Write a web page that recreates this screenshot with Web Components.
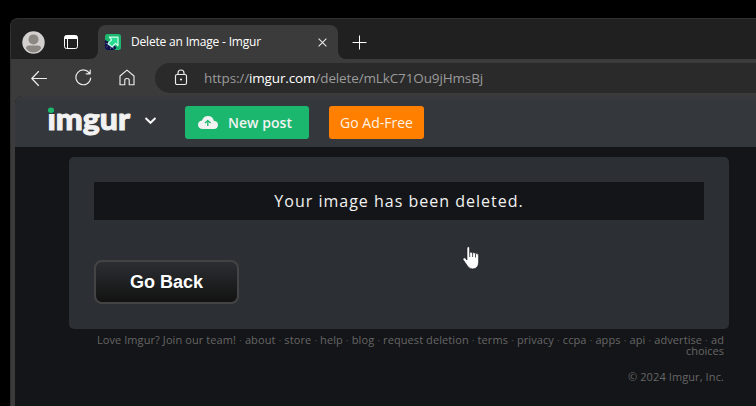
<!DOCTYPE html>
<html lang="en"><head><meta charset="utf-8"><title>Delete an Image - Imgur</title>
<style>html,body{margin:0;width:756px;height:406px;overflow:hidden;background:#000;font-family:"Open Sans","Noto Sans",sans-serif}</style></head>
<body>
<browser-window>
  <tab-strip slot="tabs"><fit-text width="130">Delete an Image - Imgur</fit-text></tab-strip>
  <address-bar slot="tools"><fit-text width="279">https://<b style="font-weight:400;color:#fff">imgur.com</b>/delete/mLkC71Ou9jHmsBj</fit-text></address-bar>
  <site-header></site-header>
  <message-panel>Your image has been deleted.</message-panel>
  <site-footer></site-footer>
</browser-window>
<mouse-hand></mouse-hand>
<script>
const define=(name,html,after)=>customElements.define(name,class extends HTMLElement{
  constructor(){super();this.attachShadow({mode:'open'}).innerHTML=html;}
  connectedCallback(){if(after)after(this);}
});

define('browser-window',`<style>
:host{display:flex;flex-direction:column;box-sizing:border-box;width:746px;height:388px;margin:18px 0 0 10px;background:#3b3b3b;border-top:1px solid #303030;border-left:1px solid #303030;border-radius:8px 0 0 0;overflow:hidden}
main{flex:1;margin-left:4px;background:#141518;border-top-left-radius:7px;overflow:hidden}
</style><slot name="tabs"></slot><slot name="tools"></slot><main><slot></slot></main>`);

define('tab-strip',`<style>
:host{display:flex;height:40px;flex:none;background:#202020;color:#fff;font-size:12px}
.lead{width:87px;display:flex;align-items:center;box-sizing:border-box;padding:6px 0 0 11px;gap:19px;background:#202020;border-bottom-right-radius:8px;height:40px}
.base{background:linear-gradient(#202020 20px,#3b3b3b 20px);display:flex;height:40px;width:100%}
.tab{width:240px;height:34px;margin-top:6px;background:#3b3b3b;border-radius:8px 8px 0 0;display:flex;align-items:center;box-sizing:border-box;padding:0 11px 0 7px}
.label{margin-left:10px;flex:1;line-height:18px}
.rest{flex:1;background:#202020;border-bottom-left-radius:8px;padding:16px 0 0 14px}
svg{display:block}
</style><div class="base"><div class="lead">
<svg width="23" height="23" viewBox="0 0 23 23"><circle cx="11.5" cy="11.5" r="11.2" fill="#d2d0ce"/><circle cx="11.5" cy="8.4" r="5" fill="#8b8783"/><path d="M4 17.6Q4 14.5 7 14.5H16Q19 14.5 19 17.6Q16 21.5 11.5 21.5T4 17.6Z" fill="#8b8783"/></svg>
<svg width="15" height="15" viewBox="0 0 15 15"><rect x=".5" y=".5" width="13" height="13" rx="2" fill="none" stroke="#fff"/><path d="M.5 2.5Q.5 .5 2.5 .5H11.5Q13.5 .5 13.5 2.5V4H.5Z" fill="#fff"/><path d="M3.5 4V13.5" stroke="#fff"/></svg>
</div><div class="tab">
<svg width="16" height="16" viewBox="0 0 16 16"><rect width="16" height="16" rx="2.5" fill="#1bb76e"/><path d="M0 6L3 7.5L5 11.5L10 12L11.5 14L9 16H2.5Q0 16 0 13.5Z" fill="#11104c"/><path d="M4.3 3.2H13V11.7L10.5 9.4L7.2 13L3 9.7L6.6 5.8Z" fill="#26dc91" stroke="#d5fff0" stroke-width="1.2" stroke-linejoin="round"/><path d="M1 9.2L2 10.2M1.5 13L2.6 12M5 14.5L6 13.8M8.6 14.5L8 13.2" stroke="#8fb5c9" stroke-width=".8" fill="none"/></svg>
<div class="label"><slot></slot></div>
<svg width="9" height="9" viewBox="0 0 9 9"><path d="M.6.6L8.4 8.4M8.4.6L.6 8.4" stroke="#e8e8e8" stroke-width="1.1"/></svg>
</div><div class="rest"><svg width="15" height="15" viewBox="0 0 15 15"><path d="M7.5.5V14.5M.5 7.5H14.5" stroke="#fff"/></svg></div></div>`);

define('address-bar',`<style>
:host{display:flex;height:37px;flex:none;background:#3b3b3b;color:#9b9b9b;font-size:13.5px}
nav{display:flex;width:144px;align-items:center;box-sizing:border-box;padding:0 0 0 20px;gap:27px}
svg{display:block;fill:none;stroke:#ececec;stroke-width:1.15;stroke-linejoin:round;stroke-linecap:round}
.url{height:30px;margin-top:4px;flex:1;background:#2a2a2a;border-radius:15px 0 0 15px;display:flex;align-items:center;padding-left:19px;gap:15px;white-space:nowrap}
.url svg{margin-top:-2px}
</style><nav>
<svg width="17" height="16" viewBox="0 0 17 16"><path d="M15.5 8.5H.8M7.5 1.5L.8 8.5L7.5 15.5"/></svg>
<svg width="17" height="17" viewBox="0 0 17 17"><path d="M14.6 4.4A7.4 7.4 0 1 0 15.7 9M15.2 1V4.8H11.2"/></svg>
<svg width="16" height="17" viewBox="0 0 16 17"><path d="M1 7L8 1.1L15 7V15.7H10.2V11Q10.2 9.5 8 9.5T5.8 11V15.7H1Z"/></svg>
</nav><div class="url"><svg width="15" height="17" viewBox="0 0 15 17"><rect x="1.5" y="5.5" width="11" height="10" rx="1.5"/><path d="M4 5.5V4Q4 1 7 1T10 4V5.5"/><circle cx="7" cy="10.5" r=".5" fill="#fff"/></svg><slot></slot></div>`);

define('fit-text',`<style>:host{display:inline-block;white-space:nowrap}</style><slot></slot>`,el=>{
  const target=+el.getAttribute('width');
  const natural=el.getBoundingClientRect().width;
  el.style.letterSpacing=((target-natural)/el.textContent.length)+'px';
});

define('cloud-icon',`<style>:host{display:block;width:20px;height:13px}svg{display:block}</style>
<svg width="20" height="13" viewBox="0 0 20 13"><path d="M5 13Q0 12.8 0 8.5Q.3 4.8 4 4.4Q5.7 0 10 0Q14.8.1 15.9 4.7Q20 5 20 9Q19.7 12.8 16 13Z" fill="#f2f2f2"/><path d="M9.8 10V4.8M7 7L9.8 4.5L12.6 7" stroke="#1bb76e" stroke-width="1.3" fill="none"/></svg>`);

define('site-header',`<style>
:host{display:flex;height:51px;background:linear-gradient(#383a3e,#34373c 5px);color:#f2f2f2;align-items:flex-start}
.logo{display:block;margin-left:30px}
.chev{display:block;margin:21px 0 0 11px}
.btn{height:33px;margin-top:10px;border-radius:3px;display:flex;align-items:center;font-size:14px;box-sizing:border-box}
.post{width:124px;background:#1bb76e;margin-left:28px;padding-left:13px;gap:10px;font-weight:600}
.ad{width:95px;background:#ff8000;margin-left:20px;justify-content:center;color:#fff2e4}
text{font:900 31px Lato,sans-serif}
</style>
<svg class="logo" width="88" height="51" viewBox="0 0 88 51">
<defs><linearGradient id="stem" gradientUnits="userSpaceOnUse" x1="0" y1="0" x2="0" y2="51"><stop offset=".345" stop-color="#34373c"/><stop offset=".345" stop-color="#f2f2f2"/></linearGradient></defs>
<text x="2.5" y="33.6" textLength="82.5" lengthAdjust="spacingAndGlyphs" fill="#f2f2f2" stroke="#f2f2f2" stroke-width="1" stroke-linejoin="round"><tspan fill="url(#stem)" stroke="url(#stem)">i</tspan>mgur</text><ellipse cx="6" cy="14.2" rx="3.1" ry="2.7" fill="#1bb76e"/></svg>
<svg class="chev" width="13" height="8" viewBox="0 0 13 8"><path d="M1.5 1L6.5 5.8L11.5 1" fill="none" stroke="#f5f5f5" stroke-width="2"/></svg>
<div class="btn post"><cloud-icon></cloud-icon><fit-text width="64">New post</fit-text></div>
<div class="btn ad"><fit-text width="73">Go Ad-Free</fit-text></div>`);

define('go-button',`<style>:host{display:block}
button{display:block;width:145px;height:44px;box-sizing:border-box;border:2px solid #444;border-radius:8px;background:linear-gradient(#2b2e33,#121211);color:#fff;font:bold 18px "Liberation Sans",Arial,sans-serif;padding:1px 0 0}
</style><button><slot></slot></button>`);

define('message-panel',`<style>
:host{display:block;box-sizing:border-box;width:660px;height:172px;margin:10px 0 0 54px;padding:25px;background:#2c2f34;border-radius:5px;color:#f2f2f2}
.note{height:38px;margin-bottom:40px;background:#141518;display:flex;align-items:center;justify-content:center;font-size:16px;letter-spacing:1px;box-sizing:border-box}
</style><div class="note"><span><slot></slot></span></div><go-button>Go Back</go-button>`);

define('site-footer',`<style>
:host{display:block;width:640px;margin:5px 0 0 69px;text-align:right;color:#666;font-size:11px;line-height:11px}
.copy{margin-top:15px}i{font-style:normal;color:#484848}
</style><div><fit-text width="627">${['Love Imgur? Join our team!','about','store','help','blog','request deletion','terms','privacy','ccpa','apps','api','advertise','ad'].join(' <i>·</i> ')}</fit-text></div><div>choices</div><div class="copy"><fit-text width="96">© 2024 Imgur, Inc.</fit-text></div>`);

define('mouse-hand',`<style>:host{position:absolute;left:462px;top:246px;width:18px;height:24px}svg{display:block}</style>
<svg width="18" height="24" viewBox="0 0 18 24"><path d="M5 14V2Q5 .7 6.3.7T7.6 2V7Q8.5 5.2 10.5 7Q11.8 5.8 13.3 7.5Q16.6 6.8 16.6 10V16Q16.5 22.9 10.5 22.9Q7 22.9 5 19.3L1 13.4Q.9 11.5 3 11.8Z" fill="#fff" stroke="#15181d" stroke-width=".6"/><path d="M7.7 7V11M10.6 7V11M13.5 8V11.5" stroke="#202329" stroke-width=".8"/></svg>`);
</script></body></html>
